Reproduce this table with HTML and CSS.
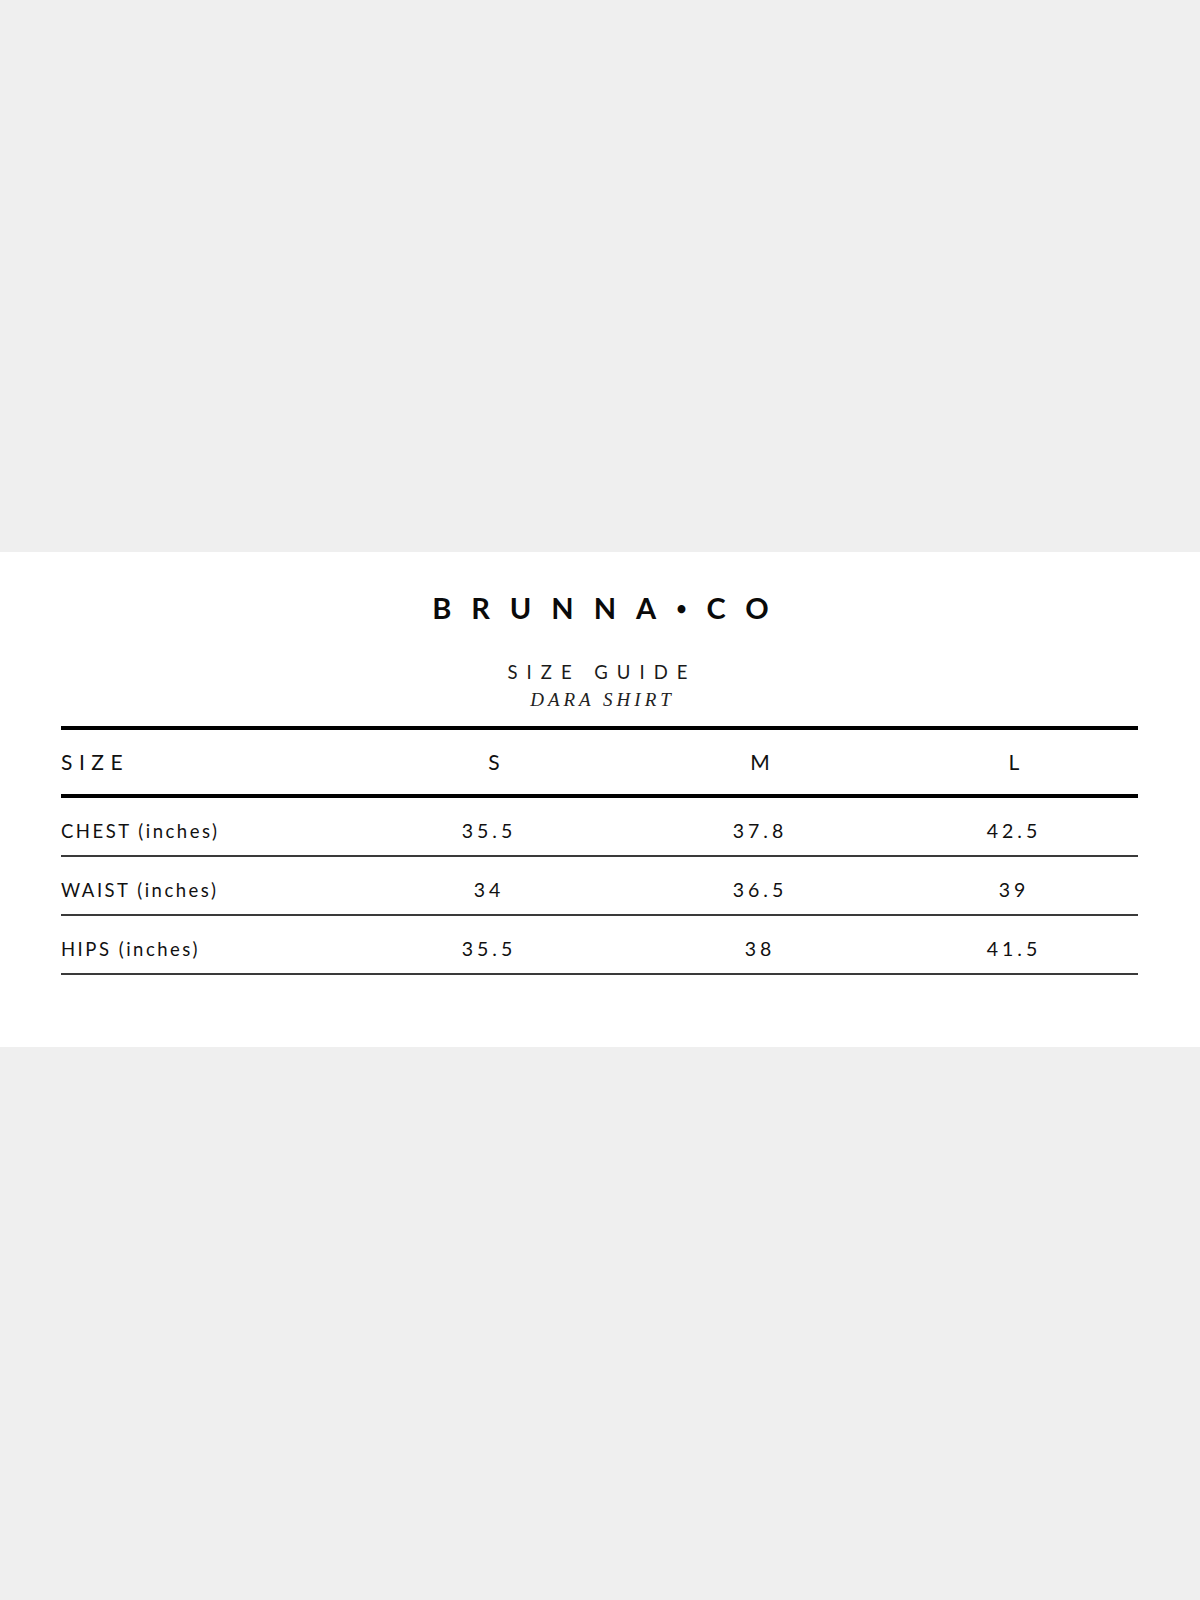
FILE: index.html
```html
<!DOCTYPE html>
<html lang="en">
<head>
<meta charset="utf-8">
<title>Brunna Co — Size Guide</title>
<link rel="stylesheet" href="styles.css">
</head>
<body>
<div class="page">
  <section class="sheet">
    <div class="brand">BRUNNA<span class="dot">•</span>CO</div>
    <div class="title">SIZE GUIDE</div>
    <div class="subtitle">DARA SHIRT</div>
    <div class="table">
      <div class="row row-head">
        <div class="label">SIZE</div>
        <div class="num num-first">S</div>
        <div class="num">M</div>
        <div class="num">L</div>
      </div>
      <div class="row row-data">
        <div class="label">CHEST (inches)</div>
        <div class="num">35.5</div>
        <div class="num">37.8</div>
        <div class="num">42.5</div>
      </div>
      <div class="row row-data">
        <div class="label">WAIST (inches)</div>
        <div class="num">34</div>
        <div class="num">36.5</div>
        <div class="num">39</div>
      </div>
      <div class="row row-data">
        <div class="label">HIPS (inches)</div>
        <div class="num">35.5</div>
        <div class="num">38</div>
        <div class="num">41.5</div>
      </div>
    </div>
  </section>
</div>
</body>
</html>
```

FILE: styles.css
```css
html, body {
  margin: 0;
  padding: 0;
}

body {
  background: #efefef;
  color: #111;
  font-family: Lato, "Liberation Sans", sans-serif;
}

.page {
  padding-top: 552px;
  min-height: 1600px;
  box-sizing: border-box;
}

.sheet {
  background: #ffffff;
  padding: 41px 62px 72px 61px;
}

.brand {
  text-align: center;
  font-weight: 700;
  font-size: 29px;
  line-height: 30px;
  letter-spacing: 20px;
  padding-left: 22px;
  color: #0a0a0a;
}

.brand .dot {
  font-size: 18px;
  position: relative;
  top: -4px;
}

.title {
  margin-top: 35px;
  text-align: center;
  font-weight: 400;
  font-size: 18.5px;
  line-height: 20px;
  letter-spacing: 9px;
  padding-left: 5px;
  color: #1a1a1a;
}

.subtitle {
  margin-top: 8px;
  text-align: center;
  font-family: "Liberation Serif", "Times New Roman", serif;
  font-style: italic;
  font-size: 19px;
  line-height: 20px;
  letter-spacing: 4px;
  padding-left: 6px;
  color: #222;
}

.table {
  margin-top: 16px;
  border-top: 4px solid #000;
}

.row {
  display: grid;
  grid-template-columns: 287px 282px 260px 248px;
  align-items: center;
}

.row-head {
  padding: 21px 0;
  line-height: 22px;
  font-size: 21px;
  border-bottom: 4px solid #000;
}

.row-head .label {
  font-size: 21px;
  letter-spacing: 6.5px;
}

.row-head .num {
  font-size: 21px;
  letter-spacing: 0;
}

.row-head .num-first {
  padding-left: 10px;
}

.row-data {
  padding: 23px 0 14px;
  line-height: 20px;
  border-bottom: 2px solid #3a3a3a;
}

.label {
  font-size: 18.5px;
  letter-spacing: 2.5px;
}

.num {
  text-align: center;
  font-size: 19.5px;
  letter-spacing: 4px;
}
```
